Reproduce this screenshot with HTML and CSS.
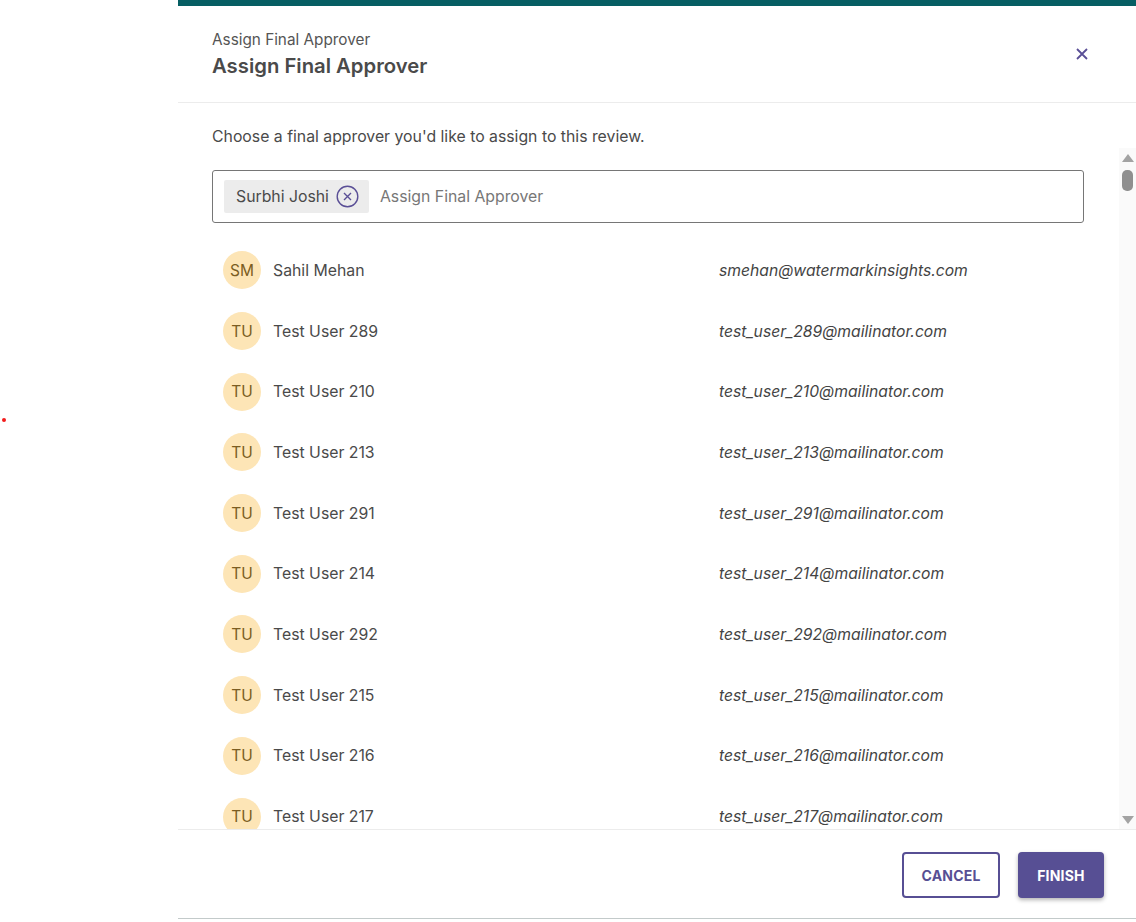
FILE: index.html
```html
<!DOCTYPE html>
<html lang="en">
<head>
    <meta charset="UTF-8">
    <title>Assign Final Approver</title>
    <link rel="stylesheet" href="styles.css">
</head>
<body>
    <span class="dot"></span>
    <div class="modal">
        <div class="modal-header">
            <div>
                <div class="sub-title">Assign Final Approver</div>
                <div class="title">Assign Final Approver</div>
            </div>
            <svg class="close" width="14" height="14" viewBox="0 0 14 14">
                <path d="M2 2 L12 12 M12 2 L2 12" stroke="#5a4f96" stroke-width="1.8" fill="none"/>
            </svg>
        </div>
        <div class="intro">Choose a final approver you'd like to assign to this review.</div>
        <div class="scroll-area">
            <div class="content">
                <div class="picker">
                    <span class="chip">Surbhi Joshi
                        <svg width="23" height="23" viewBox="0 0 23 23">
                            <circle cx="11.5" cy="11.5" r="10.3" stroke="#5a4f96" stroke-width="1.4" fill="none"/>
                            <path d="M8 8 L15 15 M15 8 L8 15" stroke="#5a4f96" stroke-width="1.4"/>
                        </svg>
                    </span>
                    <span class="placeholder">Assign Final Approver</span>
                </div>
                <div class="user-list" id="userList"></div>
            </div>
            <div class="scrollbar">
                <span class="arrow up"></span>
                <span class="thumb"></span>
                <span class="arrow down"></span>
            </div>
        </div>
        <div class="modal-footer">
            <button class="btn btn-outline">CANCEL</button>
            <button class="btn btn-primary">FINISH</button>
        </div>
    </div>
    <script>
        const users = [
            ['SM', 'Sahil Mehan', 'smehan@watermarkinsights.com'],
            ['TU', 'Test User 289', 'test_user_289@mailinator.com'],
            ['TU', 'Test User 210', 'test_user_210@mailinator.com'],
            ['TU', 'Test User 213', 'test_user_213@mailinator.com'],
            ['TU', 'Test User 291', 'test_user_291@mailinator.com'],
            ['TU', 'Test User 214', 'test_user_214@mailinator.com'],
            ['TU', 'Test User 292', 'test_user_292@mailinator.com'],
            ['TU', 'Test User 215', 'test_user_215@mailinator.com'],
            ['TU', 'Test User 216', 'test_user_216@mailinator.com'],
            ['TU', 'Test User 217', 'test_user_217@mailinator.com']
        ];
        const list = document.getElementById('userList');
        users.forEach(u => {
            list.innerHTML += `
                <div class="user-row">
                    <div class="person">
                        <span class="avatar">${u[0]}</span>
                        <span class="name">${u[1]}</span>
                    </div>
                    <span class="email">${u[2]}</span>
                </div>`;
        });
    </script>
</body>
</html>
```

FILE: styles.css
```css
body {
    margin: 0;
    font-family: 'Inter', sans-serif;
    color: #4a4a4a;
    background: #fff;
}
.dot {
    position: absolute;
    left: 2px;
    top: 418px;
    width: 4px;
    height: 4px;
    border-radius: 50%;
    background: #f21c1c;
}
.modal {
    margin-left: 178px;
    width: 958px;
    height: 912px;
    display: flex;
    flex-direction: column;
    border-top: 6px solid #065e63;
    border-bottom: 1px solid #c3caca;
    box-sizing: content-box;
    background: #fff;
    box-shadow: 0 4px 0 #dbe8ec;
}
.modal-header {
    display: flex;
    justify-content: space-between;
    align-items: flex-start;
    padding: 25px 47px 22px 34px;
    border-bottom: 1px solid #ececec;
}
.sub-title {
    font-size: 15.3px;
    line-height: 18px;
    color: #555;
}
.title {
    margin-top: 3px;
    font-size: 20.3px;
    line-height: 28px;
    font-weight: 600;
    color: #4a4a4a;
}
.close {
    margin-top: 16px;
}
.intro {
    margin: 24px 0 1px 34px;
    font-size: 15.8px;
    line-height: 20px;
    color: #4a4a4a;
}
.scroll-area {
    display: flex;
    height: 681px;
}
.content {
    flex: 1;
    overflow: hidden;
    padding: 22px 0 0 34px;
}
.picker {
    width: 872px;
    height: 53px;
    box-sizing: border-box;
    border: 1px solid #767676;
    border-radius: 3px;
    display: flex;
    align-items: center;
    padding-left: 11px;
    gap: 11px;
}
.chip {
    display: flex;
    align-items: center;
    gap: 7px;
    height: 33px;
    padding: 0 10px 0 12px;
    background: #ececec;
    border-radius: 2px;
    font-size: 15.8px;
    color: #4a4a4a;
}
.placeholder {
    font-size: 15.8px;
    color: #777;
}
.user-list {
    margin-top: 17px;
    padding-left: 11px;
}
.user-row {
    display: flex;
    align-items: center;
    height: 60.7px;
}
.person {
    width: 496px;
    display: flex;
    align-items: center;
    gap: 12px;
}
.avatar {
    width: 38px;
    height: 38px;
    border-radius: 50%;
    background: #fde5b6;
    color: #7b5d22;
    font-size: 15.5px;
    display: flex;
    align-items: center;
    justify-content: center;
}
.name {
    font-size: 15.8px;
    color: #4a4a4a;
}
.email {
    font-size: 15.7px;
    font-style: italic;
    color: #444;
}
.scrollbar {
    width: 17px;
    background: #fafafa;
    display: flex;
    flex-direction: column;
    align-items: center;
    padding: 6px 0 5px;
    box-sizing: border-box;
}
.arrow {
    width: 0;
    height: 0;
    border-left: 6px solid transparent;
    border-right: 6px solid transparent;
}
.arrow.up {
    border-bottom: 8px solid #a3a3a3;
}
.arrow.down {
    margin-top: auto;
    border-top: 8px solid #a3a3a3;
}
.thumb {
    margin-top: 8px;
    width: 11px;
    height: 21px;
    border-radius: 5px;
    background: #8f8f8f;
}
.modal-footer {
    display: flex;
    justify-content: flex-end;
    gap: 18px;
    padding: 22px 32px 20px;
    border-top: 1px solid #ececec;
}
.btn {
    height: 46px;
    border-radius: 4px;
    font-family: 'Inter', sans-serif;
    font-size: 14px;
    font-weight: 700;
    letter-spacing: 0.2px;
}
.btn-outline {
    width: 98px;
    background: #fff;
    border: 2px solid #574f94;
    color: #574f94;
}
.btn-primary {
    width: 86px;
    background: #574f94;
    border: none;
    color: #fff;
    box-shadow: 0 2px 4px rgba(0, 0, 0, 0.3);
}
```
